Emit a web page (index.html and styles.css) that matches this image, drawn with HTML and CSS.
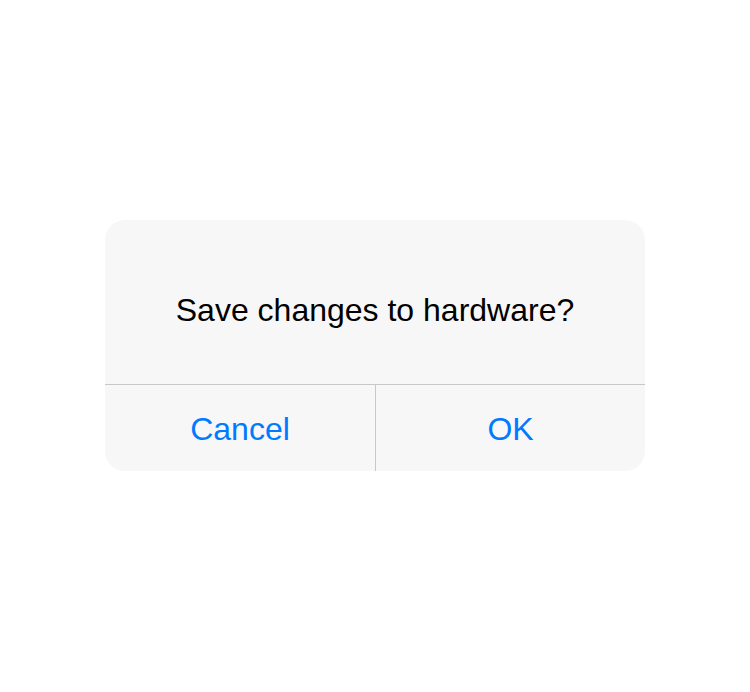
FILE: index.html
```html
<!DOCTYPE html>
<html>
<head>
<meta charset="utf-8">
<link rel="stylesheet" href="styles.css">
</head>
<body>
<div class="page">
  <div class="alert">
    <div class="alert-body">Save changes to hardware?</div>
    <div class="alert-actions">
      <div class="alert-btn">Cancel</div>
      <div class="alert-btn">OK</div>
    </div>
  </div>
</div>
</body>
</html>
```
FILE: styles.css
```css
html, body {
  margin: 0;
  padding: 0;
  background: #ffffff;
}
.page {
  width: 750px;
  height: 692px;
  display: flex;
  align-items: center;
  justify-content: center;
}
.alert {
  width: 540px;
  height: 251px;
  margin-top: -1px;
  background: #f7f7f7;
  border-radius: 20px;
  overflow: hidden;
  display: flex;
  flex-direction: column;
  font-family: "Liberation Sans", Arial, sans-serif;
}
.alert-body {
  height: 164px;
  box-sizing: border-box;
  padding-top: 16px;
  display: flex;
  align-items: center;
  justify-content: center;
  font-size: 32px;
  color: #000000;
}
.alert-actions {
  flex: 1;
  display: grid;
  grid-template-columns: 270px 1fr;
  border-top: 1px solid #c8c8c8;
}
.alert-btn {
  display: flex;
  align-items: center;
  justify-content: center;
  padding-top: 2px;
  font-size: 32px;
  color: #007aff;
}
.alert-btn + .alert-btn {
  border-left: 1px solid #c8c8c8;
}
```
